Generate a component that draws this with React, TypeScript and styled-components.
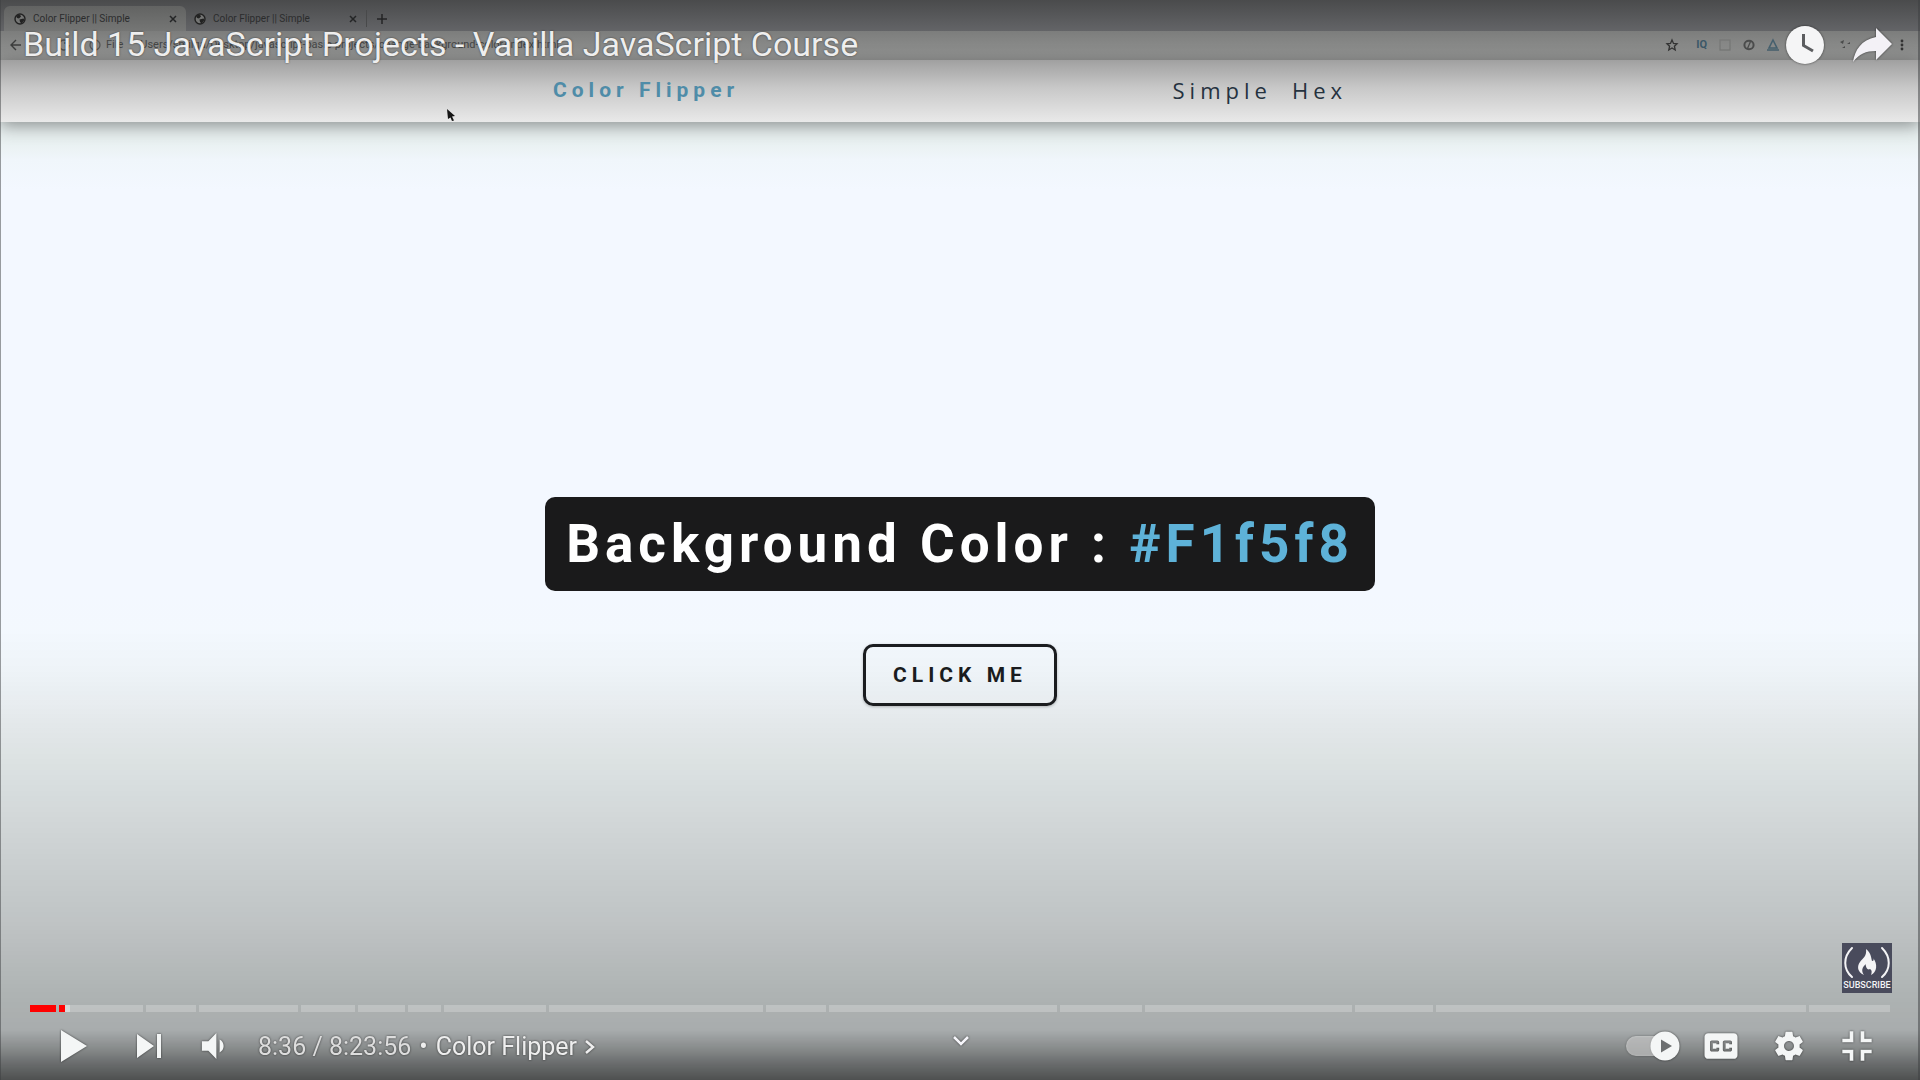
import React from "react";
import styled, { createGlobalStyle } from "styled-components";

const GlobalStyle = createGlobalStyle`
  *, *::before, *::after { box-sizing: border-box; }
  body { margin: 0; background: #000; font-family: Roboto, "Liberation Sans", sans-serif; }
  button, input { font: inherit; color: inherit; }
  button { border: 0; padding: 0; background: none; cursor: pointer; }
  a { color: inherit; text-decoration: none; }
  svg { display: block; flex-shrink: 0; overflow: visible; }
`;

const Player = styled.div`
  display: grid;
  grid-template: minmax(100vh, auto) / minmax(0, 1fr);
  overflow: hidden;
`;

/* recorded browser window */
const Screen = styled.div`
  grid-area: 1 / 1;
  display: flex;
  flex-direction: column;
  background: linear-gradient(#e8f0f0 140px, #f0f6fb 160px, #f3f8ff 190px, #f3f8ff 55%, #f3f9fa 70%);
`;

const TabStrip = styled.div`
  display: flex;
  align-items: flex-end;
  height: 31px;
  padding-left: 4px;
  background: linear-gradient(#4a4b4c, #636467);
  color: #2b2c2d;
`;

const Tab = styled.div<{ $active?: boolean }>`
  display: flex;
  align-items: center;
  gap: 7px;
  width: ${(p) => (p.$active ? 182 : 180)}px;
  height: 25px;
  padding: 0 8px 0 ${(p) => (p.$active ? 10 : 8)}px;
  border-radius: 6px 6px 0 0;
  background: ${(p) => (p.$active ? "linear-gradient(#626362, #757675)" : "none")};
  font-size: 10px;
  line-height: 16px;
`;

const TabTitle = styled.span`
  flex: 1;
  white-space: nowrap;
`;

const NewTab = styled.button`
  display: grid;
  place-items: center;
  width: 30px;
  height: 17px;
  margin-bottom: 4px;
  border-left: 1px solid #48494a;
`;

const Toolbar = styled.div`
  display: flex;
  align-items: center;
  height: 29px;
  padding: 0 12px 2px 10px;
  background: linear-gradient(#7c7d7c, #949594);
  color: #444545;
  font-size: 11px;
`;

const SiteInfo = styled.span`
  display: flex;
  align-items: center;
  gap: 5px;
  margin-left: 19px;
`;

const Address = styled.input`
  flex: 1;
  min-width: 0;
  margin-left: 17px;
  padding: 0;
  border: 0;
  background: none;
  outline: 0;
`;

const NavGlyphs = styled.div`
  display: flex;
  gap: 12px;
  align-items: center;
`;

const Extensions = styled.div`
  display: flex;
  align-items: center;
  gap: 12px;
  color: #4c5157;

  svg { width: 12px; height: 12px; }
`;

const IqMark = styled.b`
  margin-left: 6px;
  color: #3c5868;
  font-size: 11px;
  line-height: 12px;
`;

const ExtensionGap = styled.span<{ $width: number }>`
  width: ${(p) => p.$width}px;
`;

const SiteNav = styled.nav`
  display: flex;
  justify-content: center;
  height: 62px;
  padding-bottom: 2px;
  background: linear-gradient(#a0a0a0, #c8c8c8 45%, #e9e9e9);
  box-shadow: 0 4px 16px rgba(0, 0, 0, 0.4);
`;

const SiteNavInner = styled.div`
  display: flex;
  align-items: center;
  justify-content: space-between;
  width: 830px;
  padding: 0 18px 0 8px;
`;

const Brand = styled.a`
  color: #4f8ca8;
  font-size: 21px;
  font-weight: 700;
  letter-spacing: 5px;
`;

const SiteLinks = styled.div`
  display: flex;
  color: #25323f;
  font-family: "Open Sans", "Noto Sans", sans-serif;
  font-size: 22px;
  font-weight: 500;
  letter-spacing: 5px;

  a { padding: 0 10px; }
`;

const Main = styled.main`
  flex: 1;
  display: flex;
  flex-direction: column;
  align-items: center;
  justify-content: center;
  gap: 53px;
`;

const ColorHeading = styled.h1`
  margin: 0;
  padding: 16px 21px;
  border-radius: 10px;
  background: #1a1a1b;
  color: #fff;
  font-size: 53px;
  line-height: 62px;
  font-weight: 700;
  letter-spacing: 5px;
  white-space: nowrap;

  span { color: #5eb2d8; }
`;

const ClickButton = styled.button`
  padding: 14px 27px;
  border: 3px solid #1b1d20;
  border-radius: 10px;
  color: #1b1d20;
  font-size: 21px;
  line-height: 28px;
  font-weight: 700;
  letter-spacing: 5px;
  box-shadow: 0 1px 3px rgba(0, 0, 0, 0.25);
`;

/* player controls drawn over the video */
const Overlay = styled.div`
  grid-area: 1 / 1;
  z-index: 1;
  position: relative;
  display: flex;
  flex-direction: column;
  justify-content: space-between;
  border: solid rgba(60, 62, 64, 0.5);
  border-width: 0 2px 0 1px;
  background: linear-gradient(
      to top,
      rgba(0, 0, 0, 0.68) 0,
      rgba(0, 0, 0, 0.57) 16px,
      rgba(0, 0, 0, 0.44) 32px,
      rgba(0, 0, 0, 0.31) 50px,
      rgba(0, 0, 0, 0.28) 90px,
      rgba(0, 0, 0, 0.21) 160px,
      rgba(0, 0, 0, 0.07) 350px,
      rgba(0, 0, 0, 0.02) 410px,
      rgba(0, 0, 0, 0) 450px
    );
  color: #eee;
`;

const Cursor = styled.svg`
  position: absolute;
  left: 446px;
  top: 109px;
  width: 8px;
  height: 12px;
`;

const TopBar = styled.header`
  display: flex;
  align-items: center;
  justify-content: space-between;
  height: 90px;
  padding: 0 25px 0 22px;
`;

const VideoTitle = styled.a`
  padding-bottom: 2px;
  font-size: 34px;
  line-height: 40px;
  text-shadow: 0 0 2px rgba(0, 0, 0, 0.6);
`;

const TopActions = styled.div`
  display: flex;
  gap: 28px;
  filter: drop-shadow(0 0 1px rgba(0, 0, 0, 0.6));
`;

const BottomArea = styled.footer`
  display: flex;
  flex-direction: column;
  padding: 0 26px 0 29px;
`;

const Subscribe = styled.button`
  display: flex;
  flex-direction: column;
  align-items: center;
  align-self: flex-end;
  width: 50px;
  height: 50px;
  padding-top: 4px;
  margin-bottom: 12px;
  background: #494b5c;
  color: #f4f4f6;
  font-size: 9px;
  font-weight: 500;
  line-height: 12px;
`;

const Chapters = styled.div`
  display: flex;
  gap: 3px;
  height: 7px;
  margin-right: 2px;
`;

const Chapter = styled.div<{ $span: number; $fill?: string }>`
  flex: ${(p) => p.$span} 1 0;
  background: ${(p) => p.$fill ?? "rgba(255, 255, 255, 0.22)"};
`;

const RED = "#ff0000";

const Controls = styled.div`
  display: grid;
  grid-template-columns: 1fr auto 1fr;
  align-items: center;
  height: 68px;
  padding-right: 1px;
  filter: drop-shadow(0 0 1px rgba(0, 0, 0, 0.6));
`;

const ControlGroup = styled.div<{ $end?: boolean }>`
  display: flex;
  align-items: center;
  justify-content: ${(p) => (p.$end ? "flex-end" : "flex-start")};
`;

const ControlButton = styled.button<{ $width?: number }>`
  display: flex;
  align-items: center;
  justify-content: center;
  width: ${(p) => p.$width ?? 68}px;
  height: 68px;
`;

const Autoplay = styled.label`
  display: grid;
  place-items: center;
  width: 68px;
  height: 68px;
  cursor: pointer;

  input, svg { grid-area: 1 / 1; }
  input { opacity: 0; margin: 0; }
`;

const Time = styled.span`
  padding: 2px 8px 0 4px;
  color: #ddd;
  font-size: 25px;
  line-height: 32px;
  white-space: nowrap;
`;

const ChapterLink = styled.button`
  display: flex;
  align-items: center;
  gap: 8px;
  padding-top: 2px;
  font-size: 25px;
  line-height: 32px;
  white-space: nowrap;
`;

const ExpandButton = styled.button`
  display: grid;
  place-items: center;
  width: 40px;
  height: 40px;
  margin-bottom: 10px;
`;

const chapters = [84, 50, 99, 54, 47, 33, 102, 214, 60, 228, 82, 207, 78, 370, 81];

function Icon({ size, path }: { size: number; path: string }) {
  return (
    <svg width={size} height={size} viewBox="0 0 36 36" fill="#f4f6f6" fillRule="evenodd" aria-hidden="true">
      <path d={path} />
    </svg>
  );
}

const PLAY = "M12 10 25 18 12 26Z";
const NEXT = "M12 24 20.5 18 12 12ZM22 12V24H24V12Z";
const VOLUME = "M8 21H12L17 26V10L12 15H8ZM19 14V22C20.48 21.32 21.5 19.77 21.5 18C21.5 16.26 20.48 14.74 19 14Z";
const CAPTIONS =
  "M11 11C9.89 11 9 11.9 9 13V23C9 24.1 9.89 25 11 25H25C26.1 25 27 24.1 27 23V13C27 11.9 26.1 11 25 11ZM17 17H15.5V16.5H13.5V19.5H15.5V19H17V20C17 20.55 16.55 21 16 21H13C12.45 21 12 20.55 12 20V16C12 15.45 12.45 15 13 15H16C16.55 15 17 15.45 17 16ZM24 17H22.5V16.5H20.5V19.5H22.5V19H24V20C24 20.55 23.55 21 23 21H20C19.45 21 19 20.55 19 20V16C19 15.45 19.45 15 20 15H23C23.55 15 24 15.45 24 16Z";
const GEAR =
  "m23.94 18.78c.03-.25.05-.51.05-.78 0-.27-.02-.52-.05-.78l1.68-1.32c.15-.12.19-.33.09-.51l-1.6-2.76c-.09-.17-.31-.24-.48-.17l-1.99.8c-.41-.32-.86-.58-1.35-.78l-.3-2.12c-.02-.19-.19-.33-.39-.33h-3.2c-.2 0-.36.14-.39.33l-.3 2.12c-.48.2-.93.47-1.35.78l-1.99-.8c-.18-.07-.39 0-.48.17l-1.6 2.76c-.1.17-.05.39.09.51l1.68 1.32c-.03.25-.05.52-.05.78 0 .26.02.52.05.78l-1.68 1.32c-.15.12-.19.33-.09.51l1.6 2.76c.09.17.31.24.48.17l1.99-.8c.41.32.86.58 1.35.78l.3 2.12c.02.19.19.33.39.33h3.2c.2 0 .36-.14.39-.33l.3-2.12c.48-.2.93-.47 1.35-.78l1.99.8c.18.07.39 0 .48-.17l1.6-2.76c.09-.17.05-.39-.09-.51zm-5.94 2.01c-1.54 0-2.8-1.25-2.8-2.8 0-1.54 1.25-2.8 2.8-2.8 1.54 0 2.8 1.25 2.8 2.8 0 1.54-1.25 2.8-2.8 2.8z";
const EXIT_FULL = "M14 14H10V16H16V10H14ZM22 14V10H20V16H26V14ZM20 26H22V22H26V20H20ZM10 22H14V26H16V20H10Z";

function Globe() {
  return (
    <svg width="12" height="12" viewBox="0 0 12 12" aria-hidden="true">
      <circle cx="6" cy="6" r="5" fill="#747574" stroke="#222" strokeWidth="1.4" />
      <path d="M2 2.5 6 1.5 7 3.5 5 5.5 3 5ZM5.5 6.5 9.5 5.5 10.5 7 7.5 10.5 6 9Z" fill="#222" />
    </svg>
  );
}

function Glyph({ d }: { d: string }) {
  return (
    <svg width="10" height="10" viewBox="0 0 10 10" stroke="#242526" strokeWidth="1.5" aria-hidden="true">
      <path d={d} />
    </svg>
  );
}

function BrowserTab({ active }: { active?: boolean }) {
  return (
    <Tab $active={active}>
      <Globe />
      <TabTitle>Color Flipper || Simple</TabTitle>
      <button aria-label="Close tab"><Glyph d="M2 2 8 8M8 2 2 8" /></button>
    </Tab>
  );
}

export default function App() {
  return (
    <>
      <GlobalStyle />
      <Player>
        <Screen>
          <TabStrip>
            <BrowserTab active />
            <BrowserTab />
            <NewTab aria-label="New tab"><Glyph d="M5 0V10M0 5H10" /></NewTab>
          </TabStrip>
          <Toolbar>
            <NavGlyphs>
              <svg width="12" height="12" viewBox="0 0 12 12" fill="none" stroke="#3c3d3d" strokeWidth="1.4">
                <path d="M11 6H1M6 1 1 6 6 11" />
              </svg>
              <svg width="12" height="12" viewBox="0 0 12 12" fill="none" stroke="#777877" strokeWidth="1.4">
                <path d="M1 6H11M6 1 11 6 6 11" />
              </svg>
              <svg width="12" height="12" viewBox="0 0 12 12" fill="none" stroke="#505151" strokeWidth="1.4">
                <path d="M10 3A5 5 0 1 0 11 6M10 0V4H6" />
              </svg>
            </NavGlyphs>
            <SiteInfo>
              <svg width="12" height="12" viewBox="0 0 12 12" fill="none" stroke="#555656" strokeWidth="1.3">
                <circle cx="6" cy="6" r="5" />
                <path d="M6 5V9M6 3V4" />
              </svg>
              File
            </SiteInfo>
            <Address
              aria-label="Address"
              readOnly
              value="Users/smilga/Desktop/javascript-basic-projects/change-background-color/index.html"
            />
            <Extensions>
              <svg viewBox="0 0 12 12" fill="none" stroke="#333" strokeWidth="1.3">
                <path d="M6 1 7.5 4.5 11 4.8 8.4 7.2 9.2 11 6 9 2.8 11 3.6 7.2 1 4.8 4.5 4.5Z" />
              </svg>
              <IqMark>IQ</IqMark>
              <svg viewBox="0 0 12 12" fill="none" stroke="#767776" strokeWidth="1.2">
                <rect x="1" y="1" width="10" height="10" />
              </svg>
              <svg viewBox="0 0 12 12" fill="none" stroke="#4b4c4c" strokeWidth="2">
                <ellipse cx="6" cy="6" rx="4.6" ry="4.2" />
                <path d="M7.5 2.5 4.5 9.5" strokeWidth="1.3" />
              </svg>
              <svg viewBox="0 0 12 12" fill="none" stroke="#46606e" strokeWidth="1.6">
                <path d="M6 1 10 9H2ZM0 11H12" />
              </svg>
              <ExtensionGap $width={36} />
              <svg viewBox="0 0 12 12" fill="#4a4b4b">
                <path d="M1 3 5 1 4 5ZM8 5 11 3V5ZM3 9 6 7V9Z" />
              </svg>
              <ExtensionGap $width={21} />
              <svg viewBox="0 0 12 12" fill="#333">
                <circle cx="6" cy="2" r="1.4" />
                <circle cx="6" cy="6" r="1.4" />
                <circle cx="6" cy="10" r="1.4" />
              </svg>
            </Extensions>
          </Toolbar>
          <SiteNav>
            <SiteNavInner>
              <Brand href="#home">Color Flipper</Brand>
              <SiteLinks>
                <a href="#simple">Simple</a>
                <a href="#hex">Hex</a>
              </SiteLinks>
            </SiteNavInner>
          </SiteNav>
          <Main>
            <ColorHeading>
              Background Color : <span>#F1f5f8</span>
            </ColorHeading>
            <ClickButton>CLICK ME</ClickButton>
          </Main>
        </Screen>

        <Overlay>
          <Cursor viewBox="0 0 8 12" aria-hidden="true">
            <path d="M0 0 8 7 5 7.5 7 11.5 5 12 3.5 8.5 1 10Z" fill="#151515" />
          </Cursor>
          <TopBar>
            <VideoTitle href="#video">Build 15 JavaScript Projects - Vanilla JavaScript Course</VideoTitle>
            <TopActions>
              <button aria-label="Watch later">
                <svg width="40" height="40" viewBox="0 0 40 40" fill="none">
                  <circle cx="20" cy="20" r="19" fill="#f5f5f6" />
                  <path d="M18.500 9V20.500L28 26" stroke="#5c5d60" strokeWidth="3" />
                </svg>
              </button>
              <button aria-label="Share">
                <svg width="40" height="36" viewBox="0 0 40 36" fill="#f3f1f6">
                  <path d="M23 1 39 17 23 33V24C13 24 6 27 0 35C2 23 8 13 23 10Z" />
                </svg>
              </button>
            </TopActions>
          </TopBar>

          <BottomArea>
            <Subscribe>
              <svg width="46" height="32" viewBox="0 0 46 32" fill="none">
                <path d="M8 1C-1 10-1 22 8 30M38 1C47 10 47 22 38 30" stroke="#f4f4f6" strokeWidth="2" strokeLinecap="round" />
                <path
                  d="M22 2C27 6 27 10 28 14C30 14 30 12 29 11C34 17 33 25 27 28C28 25 28 23 26 22C23 24 21 18 22 17C18 20 17 24 20 28C13 25 13 19 16 15C19 11 23 9 22 2Z"
                  fill="#f4f4f6"
                />
              </svg>
              SUBSCRIBE
            </Subscribe>
            <Chapters role="progressbar" aria-label="Video progress" aria-valuemin={0} aria-valuemax={30236} aria-valuenow={516}>
              <Chapter $span={26} $fill={RED} />
              {chapters.map((span, i) => (
                <Chapter
                  key={i}
                  $span={span}
                  $fill={
                    i === 0
                      ? `linear-gradient(90deg, ${RED} 6px, rgba(255,255,255,.5) 6px 11px, rgba(255,255,255,.22) 11px)`
                      : undefined
                  }
                />
              ))}
            </Chapters>
            <Controls>
              <ControlGroup>
                <ControlButton $width={86} aria-label="Play"><Icon size={72} path={PLAY} /></ControlButton>
                <ControlButton $width={66} aria-label="Next"><Icon size={72} path={NEXT} /></ControlButton>
                <ControlButton $width={72} aria-label="Mute"><Icon size={58} path={VOLUME} /></ControlButton>
                <Time>8:36 / 8:23:56</Time>
                <ChapterLink>
                  <span>•</span>
                  <span>Color Flipper</span>
                  <svg width="10" height="16" viewBox="0 0 10 16" fill="none" stroke="#eee" strokeWidth="2.500">
                    <path d="M1 2 8 8 1 14" />
                  </svg>
                </ChapterLink>
              </ControlGroup>
              <ExpandButton aria-label="More videos">
                <svg width="16" height="10" viewBox="0 0 16 10" fill="none" stroke="#f5f5fa" strokeWidth="2.500">
                  <path d="M1 1 8 8 15 1" />
                </svg>
              </ExpandButton>
              <ControlGroup $end>
                <Autoplay aria-label="Autoplay">
                  <input type="checkbox" defaultChecked />
                  <svg width="56" height="30" viewBox="0 0 56 30">
                    <rect x="1" y="5" width="46" height="20" rx="10" fill="#fff" fillOpacity="0.5" />
                    <circle cx="40" cy="15" r="14.500" fill="#f4f6f6" />
                    <path d="M36 8.500 47 15 36 21.500Z" fill="#6c6f70" />
                  </svg>
                </Autoplay>
                <ControlButton aria-label="Subtitles"><Icon size={66} path={CAPTIONS} /></ControlButton>
                <ControlButton aria-label="Settings"><Icon size={64} path={GEAR} /></ControlButton>
                <ControlButton aria-label="Exit full screen"><Icon size={66} path={EXIT_FULL} /></ControlButton>
              </ControlGroup>
            </Controls>
          </BottomArea>
        </Overlay>
      </Player>
    </>
  );
}
